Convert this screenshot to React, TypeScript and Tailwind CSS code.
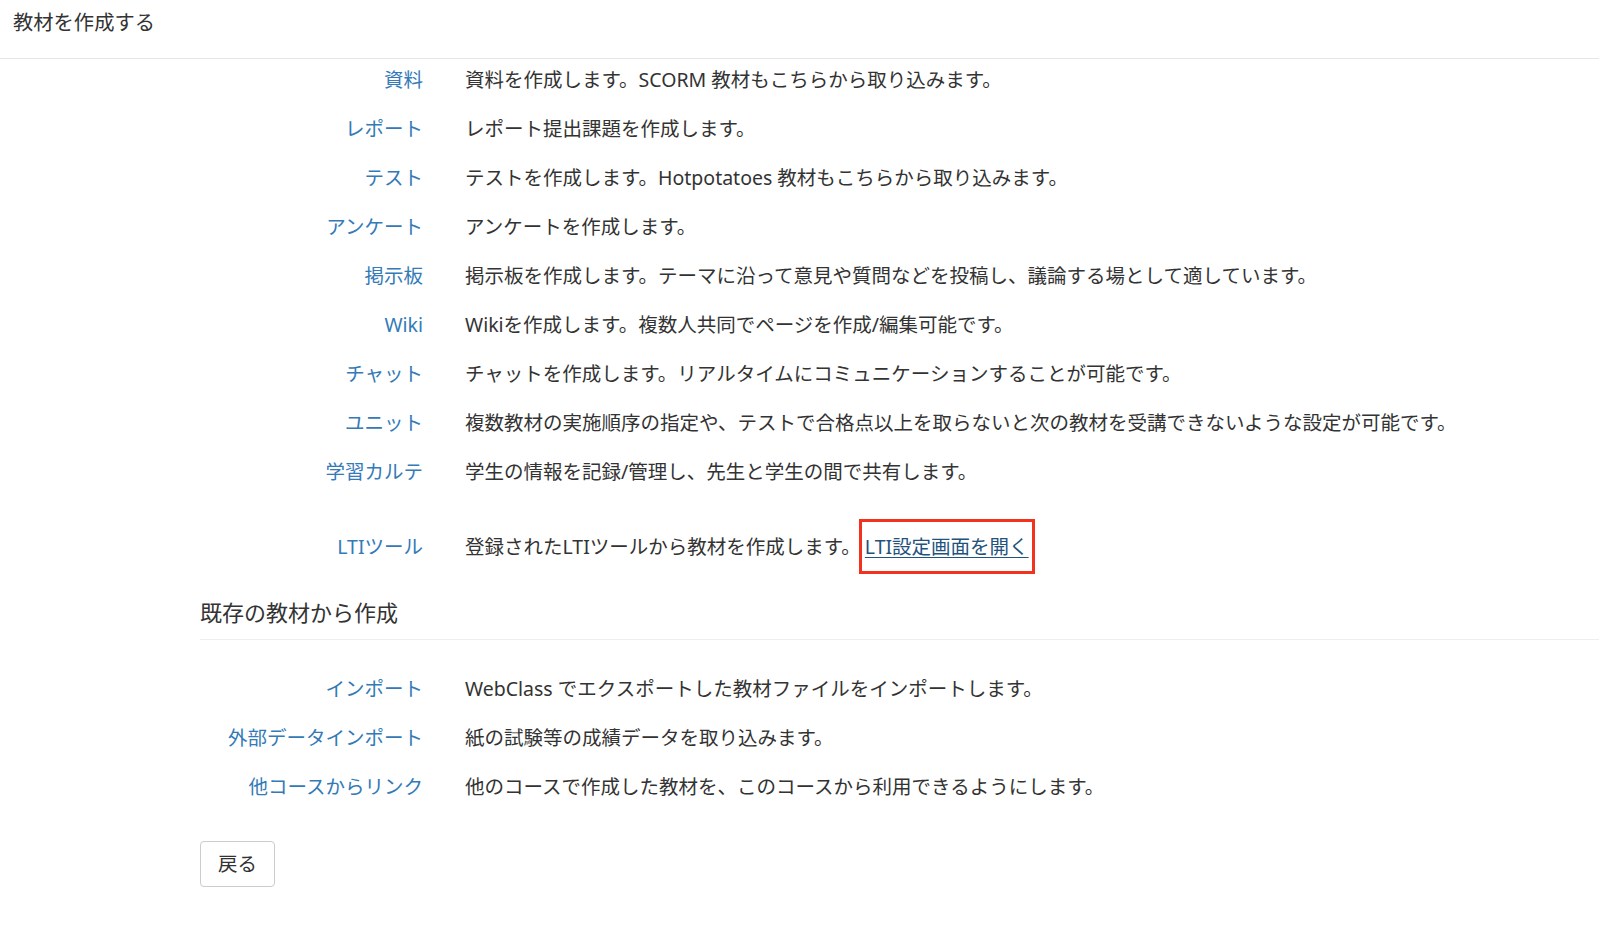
import React from "react";

const font = { fontFamily: '"Noto Sans", "Noto Sans CJK JP", sans-serif' };

type Row = { label: string; desc: React.ReactNode };

const rows: Row[] = [
  { label: "資料", desc: "資料を作成します。SCORM 教材もこちらから取り込みます。" },
  { label: "レポート", desc: "レポート提出課題を作成します。" },
  { label: "テスト", desc: "テストを作成します。Hotpotatoes 教材もこちらから取り込みます。" },
  { label: "アンケート", desc: "アンケートを作成します。" },
  { label: "掲示板", desc: "掲示板を作成します。テーマに沿って意見や質問などを投稿し、議論する場として適しています。" },
  { label: "Wiki", desc: "Wikiを作成します。複数人共同でページを作成/編集可能です。" },
  { label: "チャット", desc: "チャットを作成します。リアルタイムにコミュニケーションすることが可能です。" },
  { label: "ユニット", desc: "複数教材の実施順序の指定や、テストで合格点以上を取らないと次の教材を受講できないような設定が可能です。" },
  { label: "学習カルテ", desc: "学生の情報を記録/管理し、先生と学生の間で共有します。" },
];

const rows2: Row[] = [
  { label: "インポート", desc: "WebClass でエクスポートした教材ファイルをインポートします。" },
  { label: "外部データインポート", desc: "紙の試験等の成績データを取り込みます。" },
  { label: "他コースからリンク", desc: "他のコースで作成した教材を、このコースから利用できるようにします。" },
];

function ItemRow({ label, desc, className = "" }: Row & { className?: string }) {
  return (
    <div className={`flex items-center leading-[27px] ${className}`}>
      <a className="w-[223px] shrink-0 text-right text-[#337ab7]">{label}</a>
      <div className="ml-[42px] text-[#333] whitespace-nowrap flex items-center">{desc}</div>
    </div>
  );
}

export default function App() {
  return (
    <div className="min-h-[943px] w-full bg-white text-[19.5px] text-[#333]" style={font}>
      <div className="h-[59px] border-b border-[#e6e6e6] pl-[13px] pt-[9px]">
        <h1 className="text-[20.3px] leading-[27px] font-normal">教材を作成する</h1>
      </div>
      <div className="ml-[200px]">
        <div className="flex flex-col gap-[22px] pt-[7px]">
          {rows.map((r) => (
            <ItemRow key={r.label} {...r} />
          ))}
          <ItemRow
            className="mt-[26px]"
            label="LTIツール"
            desc={
              <>
                <span>登録されたLTIツールから教材を作成します。</span>
                <span className="-ml-[2px] -my-[14px] inline-block border-[3px] border-[#f2321d] px-[3px] py-[11px]">
                  <a className="text-[#23527c] underline underline-offset-[3px]">LTI設定画面を開く</a>
                </span>
              </>
            }
          />
        </div>
        <h2 className="mt-[37px] border-b border-[#eeeeee] pb-[12px] text-[22px] leading-[30px] font-normal">
          既存の教材から作成
        </h2>
        <div className="flex flex-col gap-[22px] pt-[35px]">
          {rows2.map((r) => (
            <ItemRow key={r.label} {...r} />
          ))}
        </div>
        <button className="mt-[41px] h-[46px] w-[75px] rounded-[4px] border border-[#cccccc] bg-white text-[19.5px] text-[#333]">
          戻る
        </button>
      </div>
    </div>
  );
}
